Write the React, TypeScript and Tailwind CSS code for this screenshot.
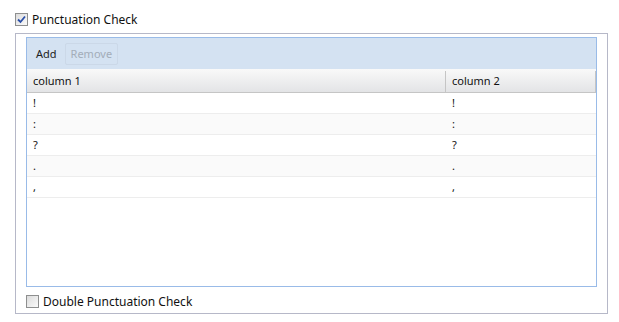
import React from 'react';

const rows = ['!', ':', '?', '.', ','];

const Checkbox: React.FC<{ checked?: boolean }> = ({ checked }) => (
  <span className="relative flex h-[13px] w-[13px] shrink-0 items-center justify-center border border-[#8e8f8f] bg-gradient-to-br from-[#dcdcdc] to-[#fbfbfb]">
    {checked && (
      <svg className="h-[9px] w-[9px]" viewBox="0 0 9 9" fill="none">
        <path d="M1 4.5 L3.5 7 L8 1.5" stroke="#2a4fa8" strokeWidth={1.8} />
      </svg>
    )}
  </span>
);

export default function App() {
  return (
    <div
      className="h-[322px] w-[619px] bg-white pl-[15px] pt-[12px] text-[#111]"
      style={{ fontFamily: '"Noto Sans", Tahoma, sans-serif' }}
    >
      {/* Top checkbox */}
      <label className="flex h-[14px] items-center gap-[4px] text-[12px] leading-none">
        <Checkbox checked />
        <span className="pt-[1px]">Punctuation Check</span>
      </label>

      {/* Group box */}
      <div className="mt-[7px] flex h-[281px] w-[593px] flex-col border border-[#b6b8c8] pl-[10px] pt-[3px]">
        <div className="flex h-[250px] w-[571px] flex-col border border-[#99bbe8]">
          {/* Toolbar */}
          <div className="flex h-[31px] items-center gap-[4px] bg-[#d4e2f2] pl-[5px] pt-[1px] text-[11px]">
            <span className="px-[4px] py-[3px] text-[#222]">Add</span>
            <span className="flex h-[22px] items-center rounded-[2px] border border-[#cbd8e8] px-[5px] text-[#a3adb9]">
              Remove
            </span>
          </div>

          {/* Header */}
          <div className="flex h-[24px] border-b border-[#c5c5c5] bg-gradient-to-b from-[#f9f9f9] to-[#e3e4e6] pt-[2px] text-[11px]">
            <div className="flex w-[419px] items-center border-r border-[#c5c5c5] pl-[6px]">column 1</div>
            <div className="flex flex-1 items-center border-r border-[#c5c5c5] pl-[6px]">column 2</div>
          </div>

          {/* Rows */}
          <div className="flex flex-col text-[11px]">
            {rows.map((r, i) => (
              <div
                key={i}
                className={`flex h-[21px] items-center border-b border-[#ededed] pt-[1px] ${i % 2 === 1 ? 'bg-[#fafafa]' : 'bg-white'}`}
              >
                <div className="w-[420px] pl-[6px]">{r}</div>
                <div className="flex-1 pl-[5px]">{r}</div>
              </div>
            ))}
          </div>
        </div>

        {/* Bottom checkbox */}
        <label className="mt-[7px] flex h-[14px] items-center gap-[4px] text-[12px] leading-none">
          <Checkbox />
          <span className="pt-[1px]">Double Punctuation Check</span>
        </label>
      </div>
    </div>
  );
}
